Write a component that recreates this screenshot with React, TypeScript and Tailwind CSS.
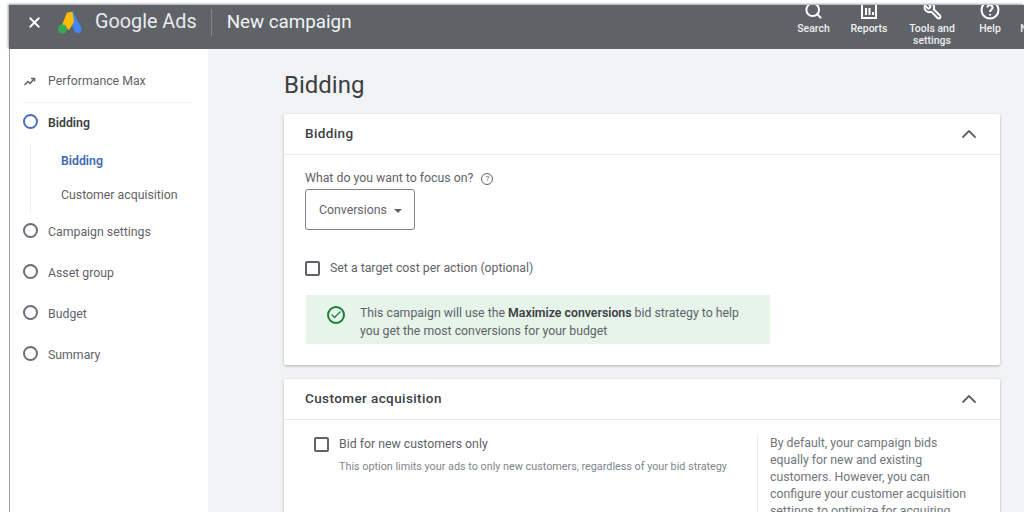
import React from 'react'
import { Check, ChevronUp, Search, Wrench, X } from 'lucide-react'

function AdsLogo() {
  return (
    <svg width="26" height="24" viewBox="0 0 26 24">
      <path d="M9.5 3.5 L15.5 1 L24.5 18 Q25.5 21.5 22 23 Q19 23.5 17.5 21 Z" fill="#4285f4" />
      <path d="M10 2.5 L15.5 2 L17 12 L12 20 L5 15 Z" fill="#fbbc04" />
      <circle cx="5.5" cy="19" r="4.5" fill="#34a853" />
    </svg>
  )
}

function ReportsIcon() {
  return (
    <svg width="18" height="18" viewBox="0 0 18 18" fill="none" stroke="#fff" strokeWidth="2">
      <path d="M2 1v15h14V1" />
      <path d="M6 6v7M9.5 6v7M13 10v3" />
    </svg>
  )
}

function HelpIcon() {
  return (
    <svg width="20" height="20" viewBox="0 0 20 20" fill="none" stroke="#fff" strokeWidth="2">
      <circle cx="10" cy="10" r="8.5" />
      <path d="M7.5 7.5a2.5 2.5 0 1 1 4 2c-1 .8-1.5 1.2-1.5 2.5" />
      <path d="M10 14v1.5" />
    </svg>
  )
}

function TrendIcon() {
  return (
    <svg width="13" height="10" viewBox="0 0 13 10" fill="none" stroke="#5f6368" strokeWidth="1.5">
      <path d="M1.5 8 L5 4.5 L7 6.5 L11 2" />
      <path d="M8 1.5h3.5v3" />
    </svg>
  )
}

function TopItem({ icon, label, className }: { icon: React.ReactNode; label: React.ReactNode; className: string }) {
  return (
    <div className={`flex flex-col items-center text-center shrink-0 ${className}`}>
      <div className="h-[20px] flex items-end justify-center">{icon}</div>
      <div className="mt-[3px] text-[10.5px] leading-[12px] font-medium whitespace-nowrap text-[#eceff1]">{label}</div>
    </div>
  )
}

function Step({ label, active }: { label: string; active?: boolean }) {
  return (
    <div className="h-[41px] flex items-center">
      <span className={`w-[15px] h-[15px] rounded-full border-2 mt-[-4px] ${active ? 'border-[#4a6cc0]' : 'border-[#6b6f73]'}`} />
      <span className={`ml-[10px] text-[12.3px] ${active ? 'font-semibold text-[#3c4043]' : 'text-[#5f6368]'}`}>{label}</span>
    </div>
  )
}

function CardHeader({ title }: { title: string }) {
  return (
    <div className="h-[41px] border-b border-[#e8eaed] pl-[21px] pr-[19px] pb-[2px] flex items-center justify-between">
      <span className="text-[13.5px] font-medium text-[#3c4043] tracking-[0.4px]">{title}</span>
      <ChevronUp size={24} strokeWidth={1.8} className="text-[#5f6368] mt-[2px]" />
    </div>
  )
}

function CheckBox() {
  return <span className="w-[15px] h-[15px] border-2 border-[#5f6368] rounded-[2px] shrink-0" />
}

export default function App() {
  return (
    <div className="w-[1024px] h-[512px] overflow-hidden bg-white pt-[5px] pl-[9px] flex flex-col font-['Roboto',sans-serif]">
      <div className="h-[44px] shrink-0 overflow-hidden bg-[#5f6368] shadow-[-1px_-1px_2px_#9aa0a6] flex items-center text-white">
        <div className="flex items-center pb-[10px]">
          <X size={17} strokeWidth={2.5} className="ml-[17px]" />
          <div className="ml-[14px]">
            <AdsLogo />
          </div>
          <span className="ml-[12px] text-[19.8px] text-[#e8eaed]">Google Ads</span>
          <div className="ml-[14px] w-px h-[27px] bg-[#80868b]" />
          <span className="ml-[15px] text-[18.8px] text-[#f1f3f4]">New campaign</span>
        </div>
        <div className="ml-auto self-start mt-[-5px] flex w-[227px] shrink-0">
          <TopItem className="w-[33px]" icon={<Search size={19} strokeWidth={2.5} />} label="Search" />
          <TopItem className="w-[38px] ml-[20px]" icon={<ReportsIcon />} label="Reports" />
          <TopItem
            className="w-[46px] ml-[21px]"
            icon={<Wrench size={19} strokeWidth={2.5} className="-scale-x-100" />}
            label={
              <>
                Tools and
                <br />
                settings
              </>
            }
          />
          <TopItem className="w-[22px] ml-[24px]" icon={<HelpIcon />} label="Help" />
          <TopItem className="w-[10px] ml-[18px]" icon={<span />} label="N" />
        </div>
      </div>

      <div className="flex flex-1 min-h-0">
        <aside className="w-[199px] shrink-0 bg-white border-l border-[#9aa0a6] pl-[13px]">
          <div className="h-[54px] pt-[12px] mr-[16px] flex items-center border-b border-[#f1f3f4]">
            <TrendIcon />
            <span className="ml-[12px] text-[12.3px] text-[#5f6368]">Performance Max</span>
          </div>
          <Step label="Bidding" active />
          <div className="ml-[7px] border-l border-[#eceff1] pl-[30px] h-[68px] flex flex-col">
            <div className="h-[35px] flex items-center text-[12.3px] font-semibold text-[#3f68b5]">Bidding</div>
            <div className="h-[33px] flex items-center text-[12.3px] text-[#5f6368]">Customer acquisition</div>
          </div>
          <Step label="Campaign settings" />
          <Step label="Asset group" />
          <Step label="Budget" />
          <Step label="Summary" />
        </aside>

        <main className="flex-1 min-w-0 bg-[#f1f3f4] pl-[76px] pr-[24px]">
          <h1 className="h-[65px] pt-[22px] text-[24px] leading-[28px] text-[#3c4043]">Bidding</h1>

          <section className="h-[251px] bg-white rounded-[2px] shadow-[0_1px_3px_rgba(60,64,67,0.35)]">
            <CardHeader title="Bidding" />
            <div className="pl-[21px]">
              <div className="pt-[13px] h-[34px] flex items-center gap-[8px] text-[12.3px] text-[#5f6368]">
                What do you want to focus on?
                <span className="w-[12px] h-[12px] rounded-full border border-[#5f6368] text-[8px] leading-[10px] text-center">?</span>
              </div>
              <div className="w-[110px] h-[41px] border border-[#80868b] rounded-[3px] pl-[13px] pt-[2px] flex items-center gap-[7px] text-[12.3px] text-[#5f6368]">
                Conversions
                <span className="w-0 h-0 border-x-[4px] border-x-transparent border-t-[4px] border-t-[#5f6368]" />
              </div>
              <div className="mt-[29px] flex items-center gap-[10px] text-[12.3px] text-[#5f6368]">
                <CheckBox />
                Set a target cost per action (optional)
              </div>
              <div className="mt-[18px] ml-px w-[464px] h-[49px] pt-[9px] bg-[#e6f4ea] flex items-start text-[12.3px] leading-[18px] text-[#5f6368]">
                <span className="ml-[21px] mt-[2px] w-[18px] h-[18px] rounded-full border-2 border-[#188038] flex items-center justify-center shrink-0">
                  <Check size={12} strokeWidth={2.5} className="text-[#188038]" />
                </span>
                <p className="ml-[15px] w-[395px]">
                  This campaign will use the <b className="font-semibold text-[#3c4043]">Maximize conversions</b> bid strategy to help you get the most conversions for your budget
                </p>
              </div>
            </div>
          </section>

          <section className="mt-[14px] h-[200px] bg-white rounded-[2px] shadow-[0_1px_3px_rgba(60,64,67,0.35)]">
            <CardHeader title="Customer acquisition" />
            <div className="flex pt-[15px]">
              <div className="ml-[30px] w-[443px] shrink-0">
                <div className="flex items-center gap-[10px] text-[12.3px] text-[#5f6368]">
                  <CheckBox />
                  Bid for new customers only
                </div>
                <p className="mt-[6px] ml-[25px] text-[10.8px] whitespace-nowrap text-[#80868b]">This option limits your ads to only new customers, regardless of your bid strategy</p>
              </div>
              <div className="border-l border-[#e8eaed] pl-[12px] w-[214px] text-[12.3px] leading-[17px] text-[#70757a]">
                By default, your campaign bids equally for new and existing customers. However, you can configure your customer acquisition settings to optimize for acquiring
              </div>
            </div>
          </section>
        </main>
      </div>
    </div>
  )
}
